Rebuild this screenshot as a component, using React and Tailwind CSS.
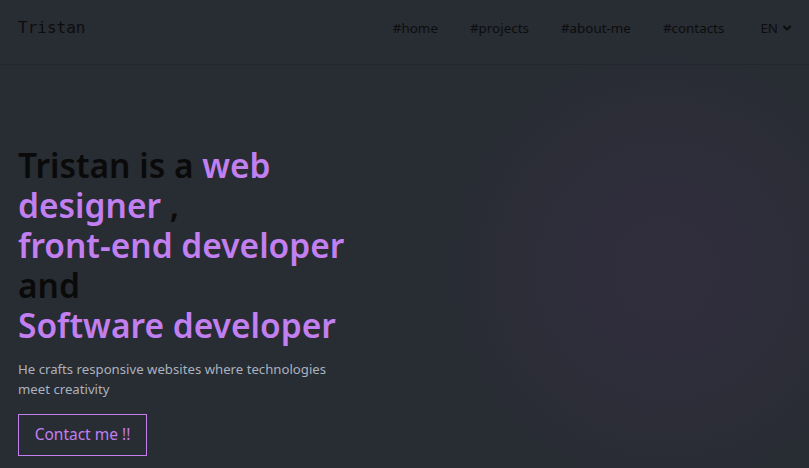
import { ChevronDown } from 'lucide-react'

const links = ['#home', '#projects', '#about-me', '#contacts']

export default function App() {
  return (
    <div className="w-[809px] h-[468px] overflow-hidden bg-[#282c33] font-['Noto_Sans',sans-serif] relative">

      {/* glow */}
      <div className="absolute left-[435px] top-[40px] w-[460px] h-[460px] rounded-full bg-[radial-gradient(circle,rgba(48,45,61,1)_0%,rgba(47,45,59,0.85)_35%,rgba(40,44,51,0)_70%)]" />

      {/* Header */}
      <header className="relative h-[65px] flex items-center justify-between pl-[18px] pr-[16px] border-b border-[#23262c]">
        <span className="font-['DejaVu_Sans_Mono',monospace] text-[16px] text-[#0d0d0d] -mt-[9px]">Tristan</span>
        <nav className="flex items-center gap-[32px] text-[13.4px] text-[#0d0d0d] -mt-[7px]">
          {links.map(l => (
            <a key={l} href="#">{l}</a>
          ))}
          <span className="flex items-center gap-[3px] ml-[4px]">
            EN <ChevronDown size={12} strokeWidth={4} />
          </span>
        </nav>
      </header>

      {/* Hero */}
      <main className="relative pl-[18px] pt-[80px]">
        <h1 className="text-[33.5px] leading-[40px] font-semibold text-[#0a0a0a] w-[360px]">
          Tristan is a <span className="text-[#c27ff0]">web</span><br />
          <span className="text-[#c27ff0]">designer</span> ,<br />
          <span className="text-[#c27ff0]">front-end developer</span><br />
          and<br />
          <span className="text-[#c27ff0]">Software developer</span>
        </h1>
        <p className="mt-[14px] text-[13.2px] leading-[20px] text-[#abb2bf] w-[330px]">
          He crafts responsive websites where technologies meet creativity
        </p>
        <button className="mt-[15px] border border-[#c27ff0] text-[#c27ff0] text-[15.5px] h-[42px] w-[129px] whitespace-nowrap">
          Contact me !!
        </button>
      </main>
    </div>
  )
}
